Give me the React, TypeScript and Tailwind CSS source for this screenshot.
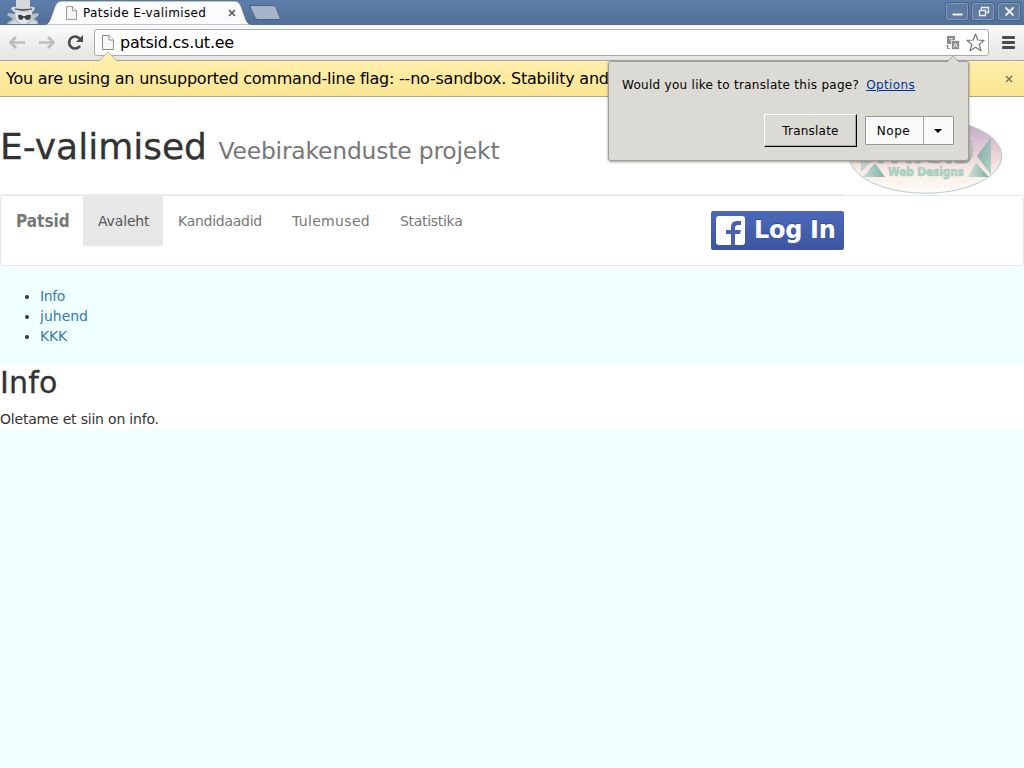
import React from "react";

const FONT = "font-['DejaVu_Sans',sans-serif]";

function PageIcon({ className = "" }: { className?: string }) {
  return (
    <svg className={className} width="12" height="15" viewBox="0 0 12 15" fill="none">
      <path d="M.5.5h6.5l4.500 4.500v9.500h-11z" fill="#f8f8f8" stroke="#8b8b8b" />
      <path d="M7 .5v4.500h4.500" fill="#fff" stroke="#8b8b8b" />
    </svg>
  );
}

function Incognito() {
  return (
    <svg className="ml-[6px] shrink-0" width="35" height="24" viewBox="0 0 35 24">
      <path d="M1 24q0-2 3-3l3-2-6-4 1-2 8 1h15l7-1 1 2-5 4q5 2 4 5z" fill="#babfc5" />
      <path d="M9 12h17l-1 7-5 5h-5l-5-5z" fill="#e3e5e8" />
      <path d="M5 8q2-2 5-1V0h14v7q3-1 5 1-1 4-5 5H11Q6 12 5 8z" fill="#d6d9dc" />
      <path d="M9 9q8 3 17 0-8 1-17 0z" fill="#4b525b" stroke="#4b525b" strokeWidth=".8" />
      <path d="M12 15q3-1 5 1h2q3-2 6-1 0 5-3 5t-4-3q-1 3-3 3-3 0-3-5z" fill="#3b4248" />
      <path d="m4 24 4-4 6 4zm18 0 5-4 4 4z" fill="#d8dbde" />
    </svg>
  );
}

function WindowButton({ children }: { children: React.ReactNode }) {
  return (
    <div className="flex h-[17px] w-[22px] items-center justify-center rounded-[2px] border border-[#8498b7] bg-[#607ba1] shadow-[0_0_0_1px_#46638b]">
      <svg width="13" height="13" viewBox="0 0 13 13" fill="none" stroke="#eef1f4">{children}</svg>
    </div>
  );
}

function TabStrip() {
  return (
    <div className="flex h-[25px] bg-linear-to-b from-[#5e7da8] to-[#506f99]">
      <Incognito />
      <div className="relative ml-[2px] h-[25px] w-[210px] shrink-0">
        <svg className="absolute inset-0" width="210" height="25" viewBox="0 0 210 25">
          <path d="M0 25q5 0 7-5l5-14Q14 1 18 1h174q4 0 6 5l5 14q2 5 7 5z" fill="#fbfbfb" stroke="#49648a" strokeWidth=".7" />
        </svg>
        <div className="relative flex h-[25px] items-center pl-[23px]">
          <PageIcon className="h-[14px] w-[11px]" />
          <span className="ml-[6px] w-[145px] whitespace-nowrap text-[12px] tracking-[0.38px] text-black">Patside E-valimised</span>
          <svg width="8" height="8" viewBox="0 0 8 8" stroke="#555" strokeWidth="1.600"><path d="m1 1 6 6M7 1 1 7" /></svg>
        </div>
      </div>
      <svg className="-ml-[4px] mt-[5px] shrink-0" width="32" height="16" viewBox="0 0 32 16">
        <path d="M1 2q0-1.500 2-1.500h21q2 0 3 2l4 10q1 2-1 2H9q-2 0-3-2z" fill="#a6b4c9" stroke="#4a658b" />
      </svg>
      <div className="ml-auto mr-[4px] mt-[3px] flex gap-[4px]">
        <WindowButton><path d="M1.500 9.500h10" strokeWidth="2" /></WindowButton>
        <WindowButton><path d="M4.500 4.500v-2h7v5h-2M2.500 5.500h6v5h-6z" strokeWidth="1.300" /></WindowButton>
        <WindowButton><path d="m2.500 2.500 8 8m0-8-8 8" strokeWidth="1.800" /></WindowButton>
      </div>
    </div>
  );
}

function Toolbar() {
  return (
    <div className="flex h-9 border-b border-[#a7a7a7] bg-linear-to-b from-[#fbfbfb] to-[#e4e4e4]">
      <svg className="ml-[9px] mt-[10px] shrink-0" width="76" height="17" viewBox="0 0 76 17" fill="none">
        <path d="M16 7.500H2.500M7 2 1.500 7.500 7 13M30 7.500h13.500M39 2l5.500 5.500L39 13" stroke="#bdbdbd" strokeWidth="2.700" />
        <path d="M71 11A6 6 0 1 1 71 4" stroke="#4c4c4c" strokeWidth="2.700" />
        <path d="M74 0v7h-7z" fill="#4c4c4c" />
      </svg>
      <div className="ml-[9px] mt-[4px] flex h-[27px] w-[895px] items-center rounded-[3px] border border-[#aaa] bg-white">
        <PageIcon className="ml-[7px]" />
        <span className="ml-[6px] whitespace-nowrap text-[16px] leading-[27px] tracking-[-0.25px] text-black">patsid.cs.ut.ee</span>
        <svg className="ml-auto" width="14" height="14" viewBox="0 0 14 14" fill="none">
          <path d="M1 0h8v8H1z" fill="#8b8b8b" />
          <path d="M3 2.500h4M5 2.500v3" stroke="#d7d7d7" />
          <path d="M5.500 4.500h8v9h-8z" fill="#8b8b8b" stroke="#fff" strokeWidth=".7" />
          <path d="m7.500 11.500 2-4.500 2 4.500M8.500 10h2" stroke="#eee" />
          <path d="M1.500 9v3.500H4M0 10h3" stroke="#8b8b8b" />
        </svg>
        <svg className="ml-[6px] mr-[3px]" width="19" height="19" viewBox="0 0 19 19">
          <path d="m9.500 1 2.300 6 6.300.3-4.900 4.200 1.800 6.200-5.500-3.500-5.500 3.500 1.800-6.200L.9 7.300 7.200 7z" fill="#fff" stroke="#777" strokeWidth="1.200" strokeLinejoin="round" />
        </svg>
      </div>
      <svg className="ml-[13px] mt-[11px]" width="13" height="14" viewBox="0 0 13 14" fill="#4b4b4b"><rect width="13" height="3" rx="1" /><rect y="5" width="13" height="3" rx="1" /><rect y="10" width="13" height="3" rx="1" /></svg>
    </div>
  );
}

function InfoBar() {
  return (
    <div className="relative flex h-9 items-center border-b border-[#aaa58e] bg-linear-to-b from-[#ffeeac] to-[#fae691] pl-[6px] pr-[11px]">
      <svg className="absolute -top-[10px] left-[98px]" width="20" height="11" viewBox="0 0 20 11"><path d="m1 10 9-9 9 9v1H1z" fill="#ffeeac" /><path d="m1 10 9-9 9 9" fill="none" stroke="#aaa58e" strokeWidth=".8" /></svg>
      <span className="whitespace-nowrap text-[16px] tracking-[-0.225px] text-black">You are using an unsupported command-line flag: --no-sandbox. Stability and</span>
      <svg className="ml-auto" width="8" height="8" viewBox="0 0 8 8" stroke="#827a60" strokeWidth="1.700"><path d="m1 1 6 6M7 1 1 7" /></svg>
    </div>
  );
}

function TranslateBubble() {
  return (
    <div className="absolute left-[608px] top-[61px] h-[100px] w-[361px] rounded-[3px] border border-[#a2a198] bg-[#dbdad5] px-[13px] pt-[14px] text-[12px] text-black shadow-[0_1px_3px_rgba(0,0,0,0.4)]">
      <svg className="absolute -top-[7px] left-[337px]" width="14" height="8" viewBox="0 0 14 8"><path d="m1 7 6-6 6 6v1H1z" fill="#dbdad5" /><path d="m1 7 6-6 6 6" fill="none" stroke="#999" strokeWidth=".8" /></svg>
      <div className="flex h-[18px] items-center whitespace-nowrap">
        <span className="tracking-[0.28px]">Would you like to translate this page?</span>
        <span className="ml-[7px] tracking-[0.4px] text-[#003399] underline">Options</span>
      </div>
      <div className="mt-[20px] flex justify-end">
        <div className="flex h-[33px] w-[93px] items-center justify-center border border-b-black border-l-white border-r-black border-t-white tracking-[0.2px] shadow-[inset_-1px_-1px_#aaa9a3]">Translate</div>
        <div className="ml-[8px] mr-[1px] mt-[2px] flex h-[29px] w-[89px] rounded-[1px] border border-[#999890] bg-[#f9f9f9]">
          <div className="flex w-[58px] items-center justify-center border-r border-[#aaa] pr-[2px] tracking-[0.5px]">Nope</div>
          <div className="flex flex-1 items-center justify-center pr-px"><svg width="8" height="4" viewBox="0 0 8 4"><path d="M0 0h8L4 4z" /></svg></div>
        </div>
      </div>
    </div>
  );
}

function Logo() {
  return (
    <svg className="mr-[21px] mt-[21px]" width="156" height="76" viewBox="0 0 156 76">
      <defs>
        <linearGradient id="oval" x1="0" y1="0" x2="0" y2="1"><stop offset=".1" stopColor="#c4aed0" /><stop offset=".5" stopColor="#ecd4d5" /><stop offset=".7" stopColor="#f9ebe5" /><stop offset="1" stopColor="#fffdf8" /></linearGradient>
        <linearGradient id="triUp" x1="0" y1="0" x2="1" y2="1"><stop stopColor="#7fa3a6" /><stop offset="1" stopColor="#b5d3ca" /></linearGradient>
        <linearGradient id="triLeft" x1="0" y1="0" x2="1" y2="0"><stop stopColor="#c4ddd5" /><stop offset="1" stopColor="#7db1a8" /></linearGradient>
        <linearGradient id="triRight" x1="0" y1="0" x2="1" y2="0"><stop stopColor="#dce5dd" /><stop offset="1" stopColor="#78ada3" /></linearGradient>
      </defs>
      <ellipse cx="78.5" cy="38" rx="76.500" ry="37.300" fill="url(#oval)" stroke="#b4cdcf" />
      <path d="M14 19v35l16-16z" fill="#c2cfcb" />
      <path d="M144 19v38l-14-19z" fill="url(#triUp)" />
      <path d="M16 59l12-14 10 14z" fill="url(#triLeft)" />
      <path d="M120 59l9-14 13 14z" fill="url(#triRight)" />
      <text x="29" y="45" textLength="98" lengthAdjust="spacingAndGlyphs" fontFamily="DejaVu Sans" fontWeight="bold" fontSize="34" fill="#c8bfc4" stroke="#a3bfba">PATSID</text>
      <text x="41" y="58" textLength="76" lengthAdjust="spacingAndGlyphs" fontFamily="DejaVu Sans" fontWeight="bold" fontSize="11.5" fill="#abcfc0" stroke="#abcfc0" strokeWidth=".7">Web Designs</text>
    </svg>
  );
}

function Navbar() {
  return (
    <nav className="flex h-[71px] rounded-[4px] border border-[#e7e7e7] bg-white text-[14px] leading-[20px] text-[#777]">
      <b className="w-[82px] whitespace-nowrap pl-[15px] pt-[15px] font-['DejaVu_Sans_Condensed','DejaVu_Sans',sans-serif] text-[17px] [font-stretch:condensed]">Patsid</b>
      <a className="h-[50px] w-[80px] bg-[#e7e7e7] pl-[15px] pt-[15px] tracking-[-0.15px] text-[#555]">Avaleht</a>
      <a className="w-[114px] pl-[15px] pt-[15px] tracking-[-0.27px]">Kandidaadid</a>
      <a className="w-[108px] pl-[15px] pt-[15px] tracking-[0.33px]">Tulemused</a>
      <a className="pl-[15px] pt-[15px] tracking-[-0.3px]">Statistika</a>
      <div className="ml-auto mr-[179px] mt-[15px] flex h-[39px] w-[133px] items-center rounded-[2px] bg-linear-to-b from-[#4c69ba] to-[#3b55a0]">
        <svg className="ml-[5px]" width="29" height="29" viewBox="0 0 29 29"><rect width="29" height="29" rx="3" fill="#fff" /><path d="M15 29V18h-5v-4h5v-3q0-6 6-6h4v4h-3q-3 0-3 3v2h6l-1 4h-5v11z" fill="#4661b0" /></svg>
        <b className="ml-[9px] whitespace-nowrap text-[24px] leading-[39px] tracking-[-0.3px] text-white [text-shadow:0_-1px_0_#354c8c]">Log In</b>
      </div>
    </nav>
  );
}

export default function App() {
  return (
    <div className={`relative flex h-[768px] w-[1024px] flex-col overflow-hidden bg-[#f0ffff] ${FONT}`}>
      <TabStrip />
      <Toolbar />
      <InfoBar />
      <header className="flex h-[98px] justify-between bg-white">
        <div className="h-[98px] w-[844px] border-b border-[#eee] pt-[30px]">
          <h1 className="whitespace-nowrap text-[36px] leading-[40px] text-[#333] [-webkit-text-stroke:0.3px_#333]">E-valimised <small className="text-[23.4px] tracking-[-0.17px] text-[#777] [-webkit-text-stroke:0]">Veebirakenduste projekt</small></h1>
        </div>
        <div className="-ml-[20px]"><Logo /></div>
      </header>
      <Navbar />
      <ul className="mt-[20px] h-[80px] list-disc pl-[40px] text-[14px] leading-[20px] text-[#333]">
        <li><a className="tracking-[-0.4px] text-[#337ab7]">Info</a></li>
        <li><a className="text-[#337ab7]">juhend</a></li>
        <li><a className="tracking-[-0.2px] text-[#337ab7]">KKK</a></li>
      </ul>
      <main className="h-[64px] bg-white text-[#333]">
        <h2 className="text-[30px] leading-[33px] tracking-[0.2px] [-webkit-text-stroke:0.3px_#333]">Info</h2>
        <p className="mt-[10px] text-[14px] leading-[20px] tracking-[-0.2px]">Oletame et siin on info.</p>
      </main>
      <TranslateBubble />
    </div>
  );
}
